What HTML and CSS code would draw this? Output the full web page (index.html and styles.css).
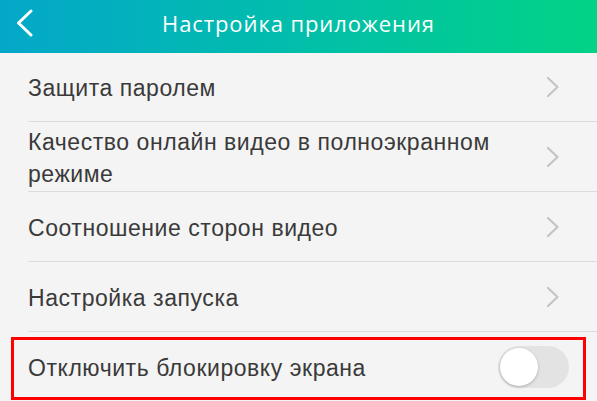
FILE: index.html
```html
<!DOCTYPE html>
<html lang="ru">
<head>
<meta charset="utf-8">
<link rel="stylesheet" href="styles.css">
</head>
<body>
<div class="screen">
  <header class="topbar">
    <svg class="back" width="20" height="28" viewBox="0 0 20 28"><path d="M16 2 L3.5 14 L16 26" fill="none" stroke="#fff" stroke-width="3" stroke-linecap="round" stroke-linejoin="round"/></svg>
    <h1 class="title">Настройка приложения</h1>
  </header>
  <ul class="list">
    <li class="row"><span class="label">Защита паролем</span><svg class="chev" width="14" height="22" viewBox="0 0 14 22"><path d="M2 2 L11.5 11 L2 20" fill="none" stroke="#c4c4c8" stroke-width="2.2" stroke-linecap="round" stroke-linejoin="round"/></svg></li>
    <li class="row"><span class="label">Качество онлайн видео в полноэкранном режиме</span><svg class="chev" width="14" height="22" viewBox="0 0 14 22"><path d="M2 2 L11.5 11 L2 20" fill="none" stroke="#c4c4c8" stroke-width="2.2" stroke-linecap="round" stroke-linejoin="round"/></svg></li>
    <li class="row"><span class="label">Соотношение сторон видео</span><svg class="chev" width="14" height="22" viewBox="0 0 14 22"><path d="M2 2 L11.5 11 L2 20" fill="none" stroke="#c4c4c8" stroke-width="2.2" stroke-linecap="round" stroke-linejoin="round"/></svg></li>
    <li class="row"><span class="label">Настройка запуска</span><svg class="chev" width="14" height="22" viewBox="0 0 14 22"><path d="M2 2 L11.5 11 L2 20" fill="none" stroke="#c4c4c8" stroke-width="2.2" stroke-linecap="round" stroke-linejoin="round"/></svg></li>
    <li class="row row-last"><span class="label">Отключить блокировку экрана</span><span class="toggle"><span class="knob"></span></span>
      <span class="highlight"></span>
    </li>
  </ul>
</div>
</body>
</html>
```

FILE: styles.css
```css
html, body {
  margin: 0;
  padding: 0;
  background: #f4f4f4;
}
body {
  font-family: "Liberation Sans", Arial, sans-serif;
}
.screen {
  width: 597px;
  height: 401px;
  overflow: hidden;
  background: #f4f4f4;
}
.topbar {
  height: 53px;
  display: flex;
  align-items: center;
  justify-content: center;
  position: relative;
  background: linear-gradient(90deg, #04a7c9 0%, #02bcae 45%, #02d386 100%);
}
.back {
  position: absolute;
  left: 15px;
  top: 9px;
}
.title {
  margin: 0;
  color: #fff;
  font-family: "Open Sans", "Liberation Sans", sans-serif;
  font-weight: normal;
  font-size: 22px;
  letter-spacing: 0.9px;
  padding-bottom: 8px;
}
.list {
  list-style: none;
  margin: 0;
  padding: 0 0 0 28px;
}
.row {
  position: relative;
  display: flex;
  align-items: center;
  border-bottom: 1px solid #dcdcdc;
  padding-right: 37px;
  box-sizing: border-box;
  height: 70px;
}
.row:first-child {
  height: 69px;
}
.label {
  flex: 1;
  font-size: 23px;
  letter-spacing: 0.55px;
  line-height: 32px;
  color: #3a3a3a;
  padding-right: 20px;
  padding-top: 2px;
}
.chev {
  flex: none;
}
.row-last {
  border-bottom: none;
  padding-right: 28px;
}
.toggle {
  flex: none;
  width: 71px;
  height: 42px;
  border-radius: 21px;
  background: #e3e3e3;
  position: relative;
}
.knob {
  position: absolute;
  left: 2px;
  top: 2px;
  width: 38px;
  height: 38px;
  border-radius: 50%;
  background: #fff;
  box-shadow: 0 1px 3px rgba(0,0,0,0.25);
}
.highlight {
  position: absolute;
  left: -17px;
  top: 5px;
  width: 575px;
  height: 63px;
  border: 3px solid #ff0000;
  box-sizing: border-box;
  pointer-events: none;
}
```
